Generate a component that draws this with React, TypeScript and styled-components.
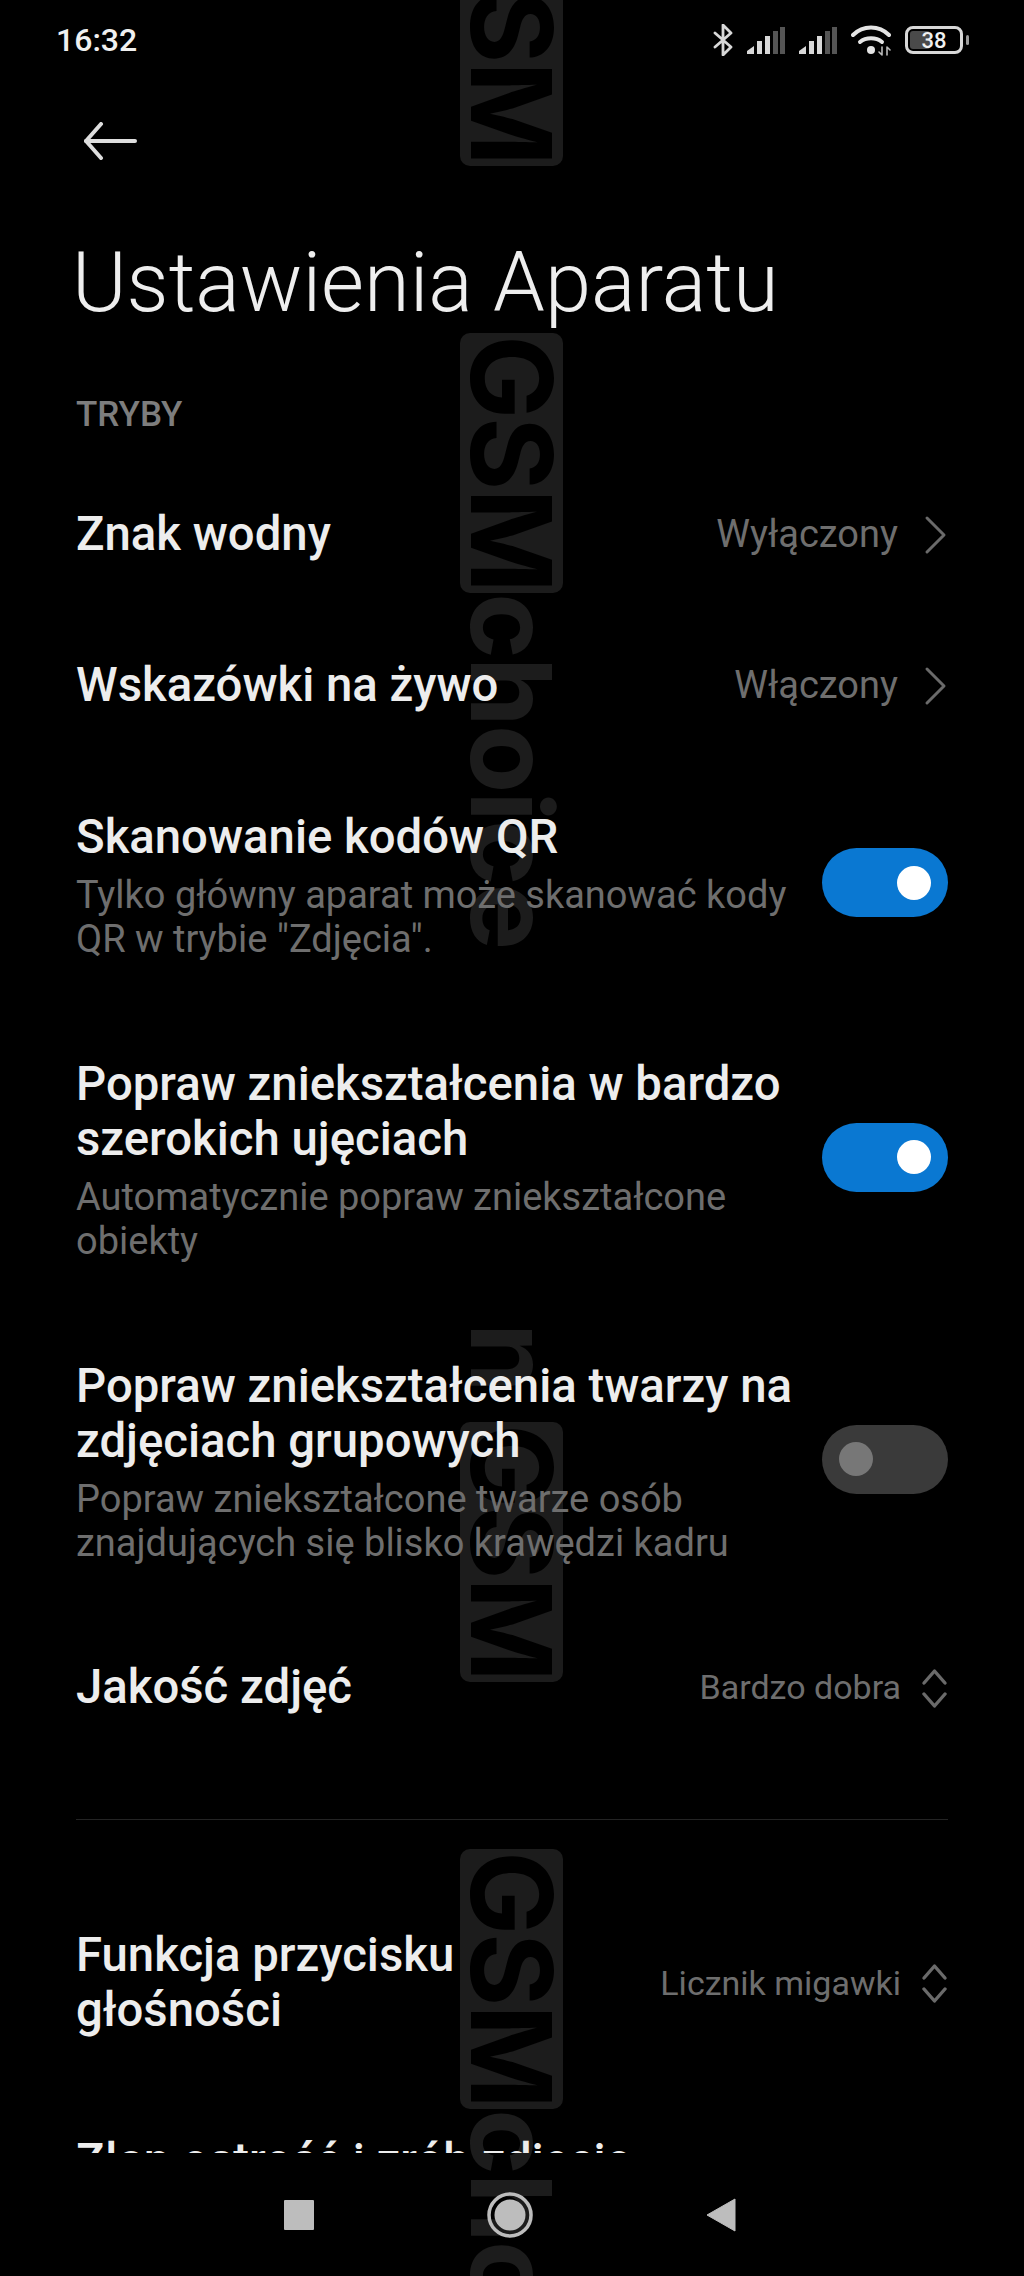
import React from 'react';
import styled, { createGlobalStyle } from 'styled-components';

const GlobalStyle = createGlobalStyle`
  html, body {
    margin: 0;
    padding: 0;
    background: #000;
  }
  * {
    box-sizing: border-box;
  }
`;

const Screen = styled.div`
  position: relative;
  width: 1024px;
  height: 2276px;
  overflow: hidden;
  background: #000;
  font-family: Roboto, "Liberation Sans", sans-serif;
  color: #ededed;
`;

/* watermark sits behind everything, so it is the one thing placed by offset */
const Watermark = styled.div<{ $top: number }>`
  position: absolute;
  left: 460px;
  top: ${(p) => p.$top}px;
  display: flex;
  flex-direction: column;
  width: 103px;
  font-family: Inter, "DejaVu Sans", sans-serif;
  font-weight: 700;
  font-size: 112px;
  white-space: nowrap;
`;

const MarkBox = styled.span`
  display: block;
  height: 260px;
  writing-mode: vertical-rl;
  line-height: 103px;
  background: #1c1c1c;
  border-radius: 10px;
  color: #000;
  text-align: center;
  letter-spacing: -2px;
`;

const MarkText = styled.span`
  display: block;
  writing-mode: vertical-rl;
  line-height: 103px;
  color: #1c1c1c;
  letter-spacing: -2px;
`;

const Layer = styled.div`
  position: relative;
  display: flex;
  flex-direction: column;
  height: 100%;
`;

const StatusBar = styled.div`
  display: flex;
  align-items: center;
  justify-content: space-between;
  height: 80px;
  padding: 0 61px 0 56px;
`;

const Clock = styled.span`
  font-size: 32px;
  font-weight: 500;
  color: #f0f0f0;
`;

const StatusIcons = styled.div`
  display: flex;
  align-items: center;
  gap: 14px;
`;

const BatteryShell = styled.div`
  position: relative;
  display: flex;
  align-items: center;
  justify-content: center;
  width: 58px;
  height: 28px;
  border: 3px solid #d8d8d8;
  border-radius: 8px;
  font-size: 22px;
  font-weight: 500;
  color: #f0f0f0;
  &::before {
    content: '';
    position: absolute;
    left: 2px;
    top: 2px;
    bottom: 2px;
    width: 38%;
    background: #4a4a4a;
    border-radius: 3px;
  }
  &::after {
    content: '';
    position: absolute;
    right: -9px;
    top: 6px;
    width: 3px;
    height: 10px;
    background: #9a9a9a;
    border-radius: 2px;
  }
`;

const BatteryValue = styled.span`
  position: relative;
`;

const Header = styled.div`
  padding: 42px 0 0 84px;
  height: 153px;
`;

const Title = styled.h1`
  margin: 0;
  padding-left: 72px;
  font-size: 83px;
  line-height: 100px;
  font-weight: 300;
  color: #eeeeee;
`;

const Body = styled.div`
  flex: 1;
  min-height: 0;
  overflow: hidden;
  padding: 0 76px;
`;

const SectionLabel = styled.div`
  height: 126px;
  padding-top: 62px;
  font-size: 35px;
  line-height: 40px;
  font-weight: 500;
  color: #7d7d7d;
`;

const Row = styled.div<{ $withHint?: boolean }>`
  display: flex;
  align-items: center;
  justify-content: space-between;
  gap: 24px;
  padding: ${(p) => (p.$withHint ? '49px 0 47px' : '48px 0')};
`;

const RowText = styled.div`
  flex: 1;
  min-width: 0;
`;

const RowTitle = styled.div`
  font-size: 47.3px;
  line-height: 55px;
  font-weight: 500;
  color: #ededed;
`;

const RowHint = styled.div`
  margin-top: 8px;
  font-size: 38px;
  line-height: 44px;
  color: #6e6e6e;
`;

const RowValue = styled.div<{ $small?: boolean }>`
  display: flex;
  align-items: center;
  gap: ${(p) => (p.$small ? 20 : 23)}px;
  font-size: ${(p) => (p.$small ? 34 : 38)}px;
  line-height: 55px;
  color: #6e6e6e;
  white-space: nowrap;
`;

const Toggle = styled.div<{ $on: boolean }>`
  display: flex;
  align-items: center;
  justify-content: ${(p) => (p.$on ? 'flex-end' : 'flex-start')};
  flex: none;
  width: 126px;
  height: 69px;
  margin-bottom: 6px;
  padding: 0 17px;
  border-radius: 35px;
  background: ${(p) => (p.$on ? '#0a78d2' : '#3a3a3a')};
`;

const Knob = styled.span<{ $on: boolean }>`
  width: 34px;
  height: 34px;
  border-radius: 50%;
  background: ${(p) => (p.$on ? '#ffffff' : '#777777')};
`;

const Divider = styled.div`
  height: 1px;
  margin: 56px 0 60px;
  background: #242424;
`;

const NavBar = styled.div`
  display: flex;
  align-items: center;
  justify-content: space-between;
  height: 123px;
  padding: 0 288px 0 284px;
`;

const NavSquare = styled.span`
  width: 30px;
  height: 30px;
  background: #bdbdbd;
  border-radius: 1px;
`;

const BackArrow = () => (
  <svg width="53" height="38" viewBox="0 0 53 38" fill="none" stroke="#dedede" strokeWidth="4" strokeLinecap="round" strokeLinejoin="round">
    <path d="M51 19H2" />
    <path d="M17 2L2 19l15 17" />
  </svg>
);

const Bluetooth = () => (
  <svg width="20" height="32" viewBox="0 0 20 32" fill="none" stroke="#d8d8d8" strokeWidth="2.8" strokeLinejoin="round" strokeLinecap="round">
    <path d="M2 9l16 14-8 8V1l8 8L2 23" />
  </svg>
);

const Signal = () => (
  <svg width="38" height="27" viewBox="0 0 38 27" fill="#d8d8d8">
    <path d="M0 27v-3l7-5v8z" />
    <rect x="10" y="14" width="5" height="13" />
    <rect x="18" y="9" width="5" height="18" />
    <rect x="26" y="4" width="5" height="23" fill="#555" />
    <rect x="33" y="0" width="5" height="27" fill="#555" />
  </svg>
);

const Wifi = () => (
  <svg width="40" height="32" viewBox="0 0 40 32" fill="none" stroke="#e4e4e4" strokeWidth="4" strokeLinecap="round">
    <path d="M2 11C12 1 28 1 38 11" />
    <path d="M9 18c6-5 16-5 22 0" />
    <circle cx="20" cy="26" r="4" fill="#e4e4e4" stroke="none" />
    <path d="M31 31v-8M28 28l3 3M36 23v8M36 23l3 3" strokeWidth="1.6" stroke="#bbb" />
  </svg>
);

const Chevron = () => (
  <svg width="27" height="40" viewBox="0 0 27 40" fill="none" stroke="#6a6a6a" strokeWidth="3" strokeLinecap="round" strokeLinejoin="round">
    <path d="M6 3l17 17L6 37" />
  </svg>
);

const UpDown = () => (
  <svg width="27" height="40" viewBox="0 0 27 40" fill="none" stroke="#6a6a6a" strokeWidth="3.4" strokeLinecap="round" strokeLinejoin="round">
    <path d="M3 15L13.500 3 24 15" />
    <path d="M3 26l10.500 12L24 26" />
  </svg>
);

const NavHome = () => (
  <svg width="46" height="46" viewBox="0 0 46 46">
    <circle cx="23" cy="23" r="21" fill="none" stroke="#bdbdbd" strokeWidth="3.5" />
    <circle cx="23" cy="23" r="15.500" fill="#bdbdbd" />
  </svg>
);

const NavBack = () => (
  <svg width="30" height="34" viewBox="0 0 30 34" fill="#bdbdbd">
    <path d="M29 1v32L1 17z" stroke="#bdbdbd" strokeLinejoin="round" />
  </svg>
);

export default function App() {
  return (
    <>
      <GlobalStyle />
      <Screen>
        <Watermark $top={-94}>
          <MarkBox>GSM</MarkBox>
        </Watermark>
        <Watermark $top={333}>
          <MarkBox>GSM</MarkBox>
          <MarkText>choice</MarkText>
        </Watermark>
        <Watermark $top={1323}>
          <MarkText>n</MarkText>
        </Watermark>
        <Watermark $top={1422}>
          <MarkBox>GSM</MarkBox>
        </Watermark>
        <Watermark $top={1849}>
          <MarkBox>GSM</MarkBox>
          <MarkText>choice</MarkText>
        </Watermark>
        <Layer>
          <StatusBar>
            <Clock>16:32</Clock>
            <StatusIcons>
              <Bluetooth />
              <Signal />
              <Signal />
              <Wifi />
              <BatteryShell>
                <BatteryValue>38</BatteryValue>
              </BatteryShell>
            </StatusIcons>
          </StatusBar>
          <Header>
            <BackArrow />
          </Header>
          <Title>Ustawienia Aparatu</Title>
          <Body>
            <SectionLabel>TRYBY</SectionLabel>
            <Row>
              <RowText><RowTitle>Znak wodny</RowTitle></RowText>
              <RowValue>Wyłączony <Chevron /></RowValue>
            </Row>
            <Row>
              <RowText><RowTitle>Wskazówki na żywo</RowTitle></RowText>
              <RowValue>Włączony <Chevron /></RowValue>
            </Row>
            <Row $withHint>
              <RowText>
                <RowTitle>Skanowanie kodów QR</RowTitle>
                <RowHint>Tylko główny aparat może skanować kody QR w trybie "Zdjęcia".</RowHint>
              </RowText>
              <Toggle $on><Knob $on /></Toggle>
            </Row>
            <Row $withHint>
              <RowText>
                <RowTitle>Popraw zniekształcenia w bardzo szerokich ujęciach</RowTitle>
                <RowHint>Automatycznie popraw zniekształcone obiekty</RowHint>
              </RowText>
              <Toggle $on><Knob $on /></Toggle>
            </Row>
            <Row $withHint>
              <RowText>
                <RowTitle>Popraw zniekształcenia twarzy na zdjęciach grupowych</RowTitle>
                <RowHint>Popraw zniekształcone twarze osób znajdujących się blisko krawędzi kadru</RowHint>
              </RowText>
              <Toggle $on={false}><Knob $on={false} /></Toggle>
            </Row>
            <Row>
              <RowText><RowTitle>Jakość zdjęć</RowTitle></RowText>
              <RowValue $small>Bardzo dobra <UpDown /></RowValue>
            </Row>
            <Divider />
            <Row>
              <RowText><RowTitle>Funkcja przycisku głośności</RowTitle></RowText>
              <RowValue $small>Licznik migawki <UpDown /></RowValue>
            </Row>
            <Row>
              <RowText><RowTitle>Złap ostrość i zrób zdjęcie</RowTitle></RowText>
            </Row>
          </Body>
          <NavBar>
            <NavSquare />
            <NavHome />
            <NavBack />
          </NavBar>
        </Layer>
      </Screen>
    </>
  );
}
